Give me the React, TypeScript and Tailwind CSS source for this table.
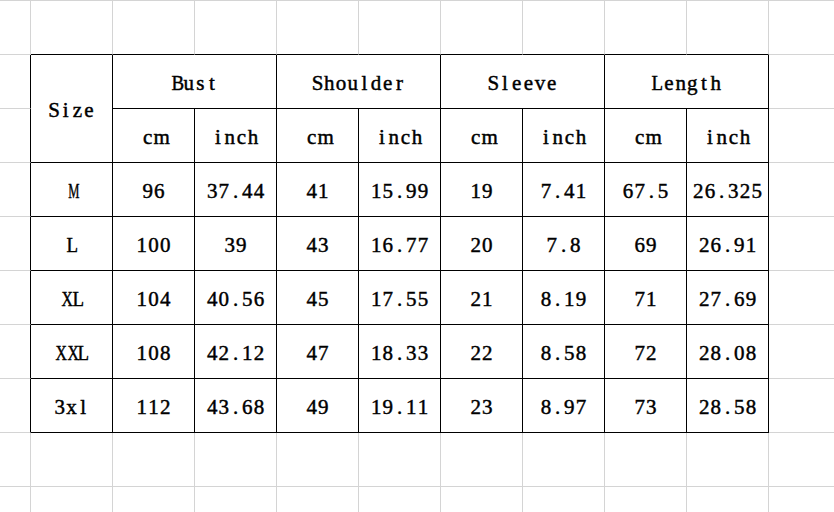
const header = ['Bust', 'Shoulder', 'Sleeve', 'Length'];

const rows = [
  ['M', '96', '37.44', '41', '15.99', '19', '7.41', '67.5', '26.325'],
  ['L', '100', '39', '43', '16.77', '20', '7.8', '69', '26.91'],
  ['XL', '104', '40.56', '45', '17.55', '21', '8.19', '71', '27.69'],
  ['XXL', '108', '42.12', '47', '18.33', '22', '8.58', '72', '28.08'],
  ['3xl', '112', '43.68', '49', '19.11', '23', '8.97', '73', '28.58'],
];

// plain sheet cell, gray lines
const blank = 'border-r border-b border-[#d4d4d4]';
// table cell, black lines
const cell = 'flex items-center justify-center border-r border-b border-black pt-[4px]';

// wide capitals are squeezed to the fixed pitch of the sheet font
const squeeze: Record<string, string> = {
  M: 'scale-x-60',
  X: 'scale-x-75',
  L: 'scale-x-90',
  B: 'scale-x-90',
};

function Mono({ text }: { text: string }) {
  return (
    <span className="flex">
      {text.split('').map((c, i) => (
        <span key={i} className={'inline-block w-[11.7px] text-center ' + (squeeze[c] ?? '')}>
          {c}
        </span>
      ))}
    </span>
  );
}

function Blank({ right, bottom }: { right?: boolean; bottom?: boolean }) {
  let cls = blank;
  if (right) cls += ' border-r-black';
  if (bottom) cls += ' border-b-black';
  return <div className={cls} />;
}

export default function App() {
  return (
    <div className="h-[512px] w-[834px] overflow-hidden bg-white">
      <div
        className="grid grid-cols-[31px_repeat(10,82px)] grid-rows-[repeat(10,54px)] border-t border-[#d4d4d4] text-[21px] text-black [-webkit-text-stroke:0.45px_black]"
        style={{ fontFamily: '"Liberation Serif", "Times New Roman", serif' }}
      >
        {/* row 0 */}
        <Blank />
        {Array.from({ length: 9 }).map((_, i) => (
          <Blank key={i} bottom />
        ))}
        <Blank />

        {/* header rows */}
        <Blank right />
        <div className={cell + ' row-span-2'}>
          <Mono text="Size" />
        </div>
        {header.map((h) => (
          <div key={h} className={cell + ' col-span-2'}>
            <Mono text={h} />
          </div>
        ))}
        <Blank />

        <Blank right />
        {header.map((h) => [
          <div key={h + 'cm'} className={cell}>
            <Mono text="cm" />
          </div>,
          <div key={h + 'in'} className={cell}>
            <Mono text="inch" />
          </div>,
        ])}
        <Blank />

        {/* data */}
        {rows.map((r) => [
          <Blank key={r[0] + 'l'} right />,
          ...r.map((v, i) => (
            <div key={r[0] + i} className={cell}>
              <Mono text={v} />
            </div>
          )),
          <Blank key={r[0] + 'r'} />,
        ])}

        {Array.from({ length: 22 }).map((_, i) => (
          <Blank key={'e' + i} />
        ))}
      </div>
    </div>
  );
}
